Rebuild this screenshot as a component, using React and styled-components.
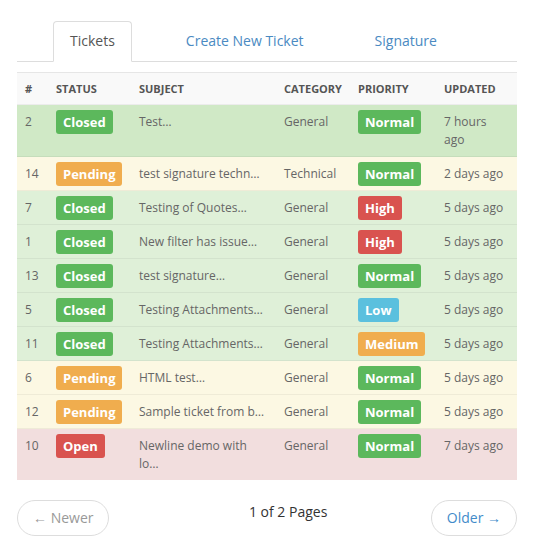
import React from 'react'
import styled, { createGlobalStyle } from 'styled-components'

const GlobalStyle = createGlobalStyle`
  body {
    margin: 0;
    background: #fff;
    font-family: "Open Sans", "Liberation Sans", sans-serif;
    color: #555;
  }
`

const tickets = [
  { id: 2, status: 'Closed', subject: 'Test…', category: 'General', priority: 'Normal', updated: '7 hours ago', hover: true },
  { id: 14, status: 'Pending', subject: 'test signature techn…', category: 'Technical', priority: 'Normal', updated: '2 days ago' },
  { id: 7, status: 'Closed', subject: 'Testing of Quotes…', category: 'General', priority: 'High', updated: '5 days ago' },
  { id: 1, status: 'Closed', subject: 'New filter has issue…', category: 'General', priority: 'High', updated: '5 days ago' },
  { id: 13, status: 'Closed', subject: 'test signature…', category: 'General', priority: 'Normal', updated: '5 days ago' },
  { id: 5, status: 'Closed', subject: 'Testing Attachments…', category: 'General', priority: 'Low', updated: '5 days ago' },
  { id: 11, status: 'Closed', subject: 'Testing Attachments…', category: 'General', priority: 'Medium', updated: '5 days ago' },
  { id: 6, status: 'Pending', subject: 'HTML test…', category: 'General', priority: 'Normal', updated: '5 days ago' },
  { id: 12, status: 'Pending', subject: 'Sample ticket from b…', category: 'General', priority: 'Normal', updated: '5 days ago' },
  { id: 10, status: 'Open', subject: 'Newline demo with lo…', category: 'General', priority: 'Normal', updated: '7 days ago' },
]

const rowColors = {
  Closed: '#dff0d8',
  Pending: '#fcf8e3',
  Open: '#f2dede',
}

const badgeColors = {
  Closed: '#5cb85c',
  Pending: '#f0ad4e',
  Open: '#d9534f',
  Normal: '#5cb85c',
  High: '#d9534f',
  Low: '#5bc0de',
  Medium: '#f0ad4e',
}

const Page = styled.div`
  padding: 21px 28px 0 17px;
  width: 500px;
`

const Tabs = styled.ul`
  display: flex;
  list-style: none;
  margin: 0;
  padding: 0 0 0 36px;
  border-bottom: 1px solid #ddd;
`

const Tab = styled.li`
  margin: 0 37px -1px 0;
  padding: 9px 16px 10px;
  line-height: 20px;
  font-size: 14px;
  border: 1px solid ${p => (p.$active ? '#ddd' : 'transparent')};
  border-bottom-color: ${p => (p.$active ? '#fff' : 'transparent')};
  border-radius: 4px 4px 0 0;
  background: ${p => (p.$active ? '#fff' : 'transparent')};
  color: ${p => (p.$active ? '#555' : '#4a8ac2')};
  cursor: pointer;
`

const Table = styled.table`
  margin-top: 10px;
  width: 500px;
  border-collapse: collapse;
  table-layout: fixed;
  font-size: 12px;
`

const Th = styled.th`
  padding: 8px 8px 7px;
  line-height: 16px;
  font-size: 11px;
  font-weight: 700;
  text-transform: uppercase;
  text-align: left;
  color: #555;
  background: #f9f9f9;
  border-top: 1px solid #e6e6e6;
`

const Row = styled.tr`
  background: ${p => (p.$hover ? '#d0e9c6' : rowColors[p.$status])};
`

const Td = styled.td`
  padding: 8px 8px 7px;
  line-height: 18px;
  vertical-align: top;
  color: #666;
  border-top: 1px solid rgba(0, 0, 0, 0.05);
`

const Badge = styled.span`
  display: inline-block;
  vertical-align: top;
  margin: -3px 0;
  padding: 3px 7px;
  line-height: 18px;
  border-radius: 3px;
  font-size: 13px;
  font-weight: 700;
  color: #fff;
  background: ${p => badgeColors[p.$kind]};
`

const Pager = styled.div`
  display: flex;
  justify-content: space-between;
  align-items: flex-start;
  margin-top: 20px;
`

const PagerButton = styled.a`
  display: inline-block;
  padding: 8px 15px;
  line-height: 18px;
  font-size: 14px;
  border: 1px solid #ddd;
  border-radius: 18px;
  background: #fff;
  color: ${p => (p.$disabled ? '#999' : '#428bca')};
  text-decoration: none;
  cursor: ${p => (p.$disabled ? 'default' : 'pointer')};
`

const PageInfo = styled.span`
  padding: 2px 0 0 36px;
  line-height: 20px;
  font-size: 14px;
  color: #333;
`

export default function App() {
  return (
    <Page>
      <GlobalStyle />
      <Tabs>
        <Tab $active>Tickets</Tab>
        <Tab>Create New Ticket</Tab>
        <Tab>Signature</Tab>
      </Tabs>
      <Table>
        <colgroup>
          <col style={{ width: 31 }} />
          <col style={{ width: 83 }} />
          <col style={{ width: 145 }} />
          <col style={{ width: 74 }} />
          <col style={{ width: 86 }} />
          <col style={{ width: 81 }} />
        </colgroup>
        <thead>
          <tr>
            <Th>#</Th>
            <Th>Status</Th>
            <Th>Subject</Th>
            <Th>Category</Th>
            <Th>Priority</Th>
            <Th>Updated</Th>
          </tr>
        </thead>
        <tbody>
          {tickets.map(t => (
            <Row key={t.id} $status={t.status} $hover={t.hover}>
              <Td>{t.id}</Td>
              <Td><Badge $kind={t.status}>{t.status}</Badge></Td>
              <Td>{t.subject}</Td>
              <Td>{t.category}</Td>
              <Td><Badge $kind={t.priority}>{t.priority}</Badge></Td>
              <Td>{t.updated}</Td>
            </Row>
          ))}
        </tbody>
      </Table>
      <Pager>
        <PagerButton $disabled>← Newer</PagerButton>
        <PageInfo>1 of 2 Pages</PageInfo>
        <PagerButton>Older →</PagerButton>
      </Pager>
    </Page>
  )
}
